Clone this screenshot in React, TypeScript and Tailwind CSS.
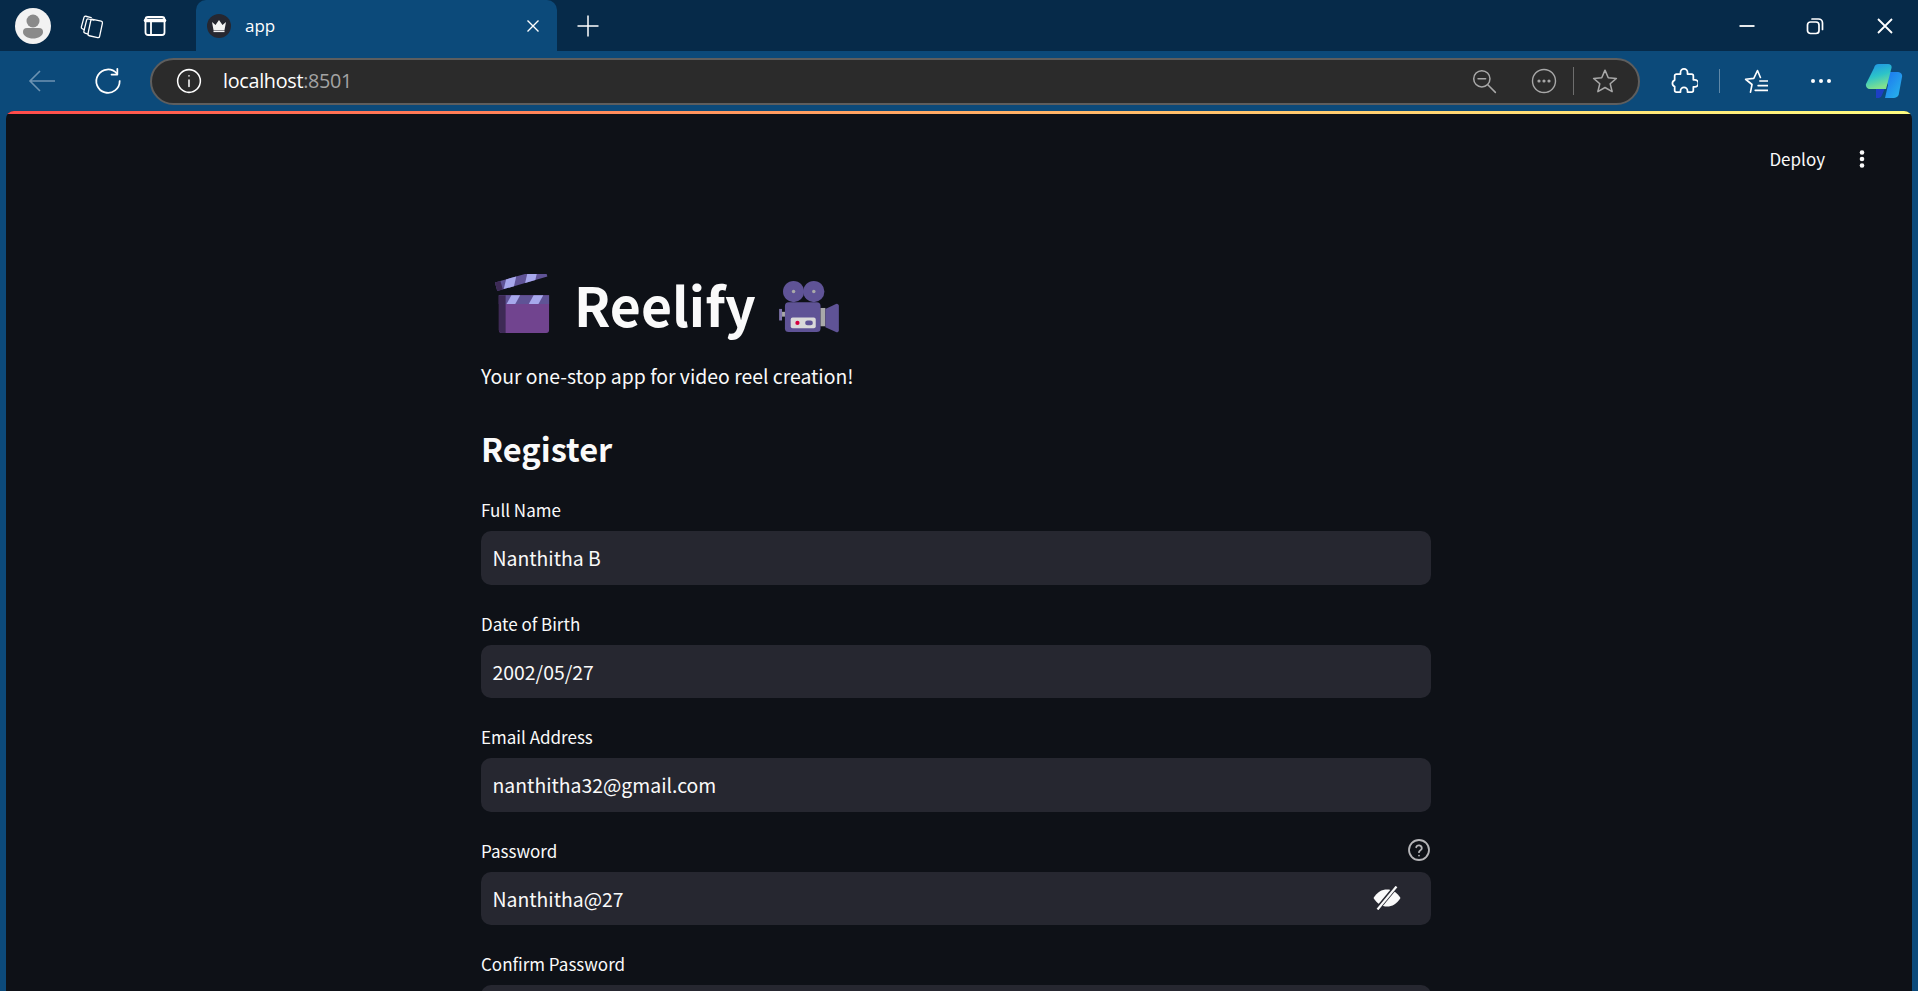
import React from "react";

const sans = { fontFamily: '"Noto Sans CJK SC", "Source Sans Pro", sans-serif' };

function Stroke({ size = 24, children, className = "", vb = 24, sw = 1.5 }: { size?: number; children: React.ReactNode; className?: string; vb?: number; sw?: number }) {
  return (
    <svg width={size} height={size} viewBox={`0 0 ${vb} ${vb}`} fill="none" stroke="currentColor" strokeWidth={sw} strokeLinecap="round" strokeLinejoin="round" className={className}>
      {children}
    </svg>
  );
}

function Clapper() {
  return (
    <svg width="56" height="60" viewBox="0 0 58 62">
      <g transform="rotate(-16 4 16)">
        <rect x="2" y="8" width="54" height="9" fill="#5f5396" />
        <rect x="2" y="8" width="6" height="9" fill="#3d2a55" />
        <polygon points="14,8 25,8 20,17 9,17" fill="#a7a8ec" />
        <polygon points="37,8 48,8 43,17 32,17" fill="#a7a8ec" />
      </g>
      <path d="M4 22h52v36a3 3 0 0 1-3 3H7a3 3 0 0 1-3-3z" fill="#71448f" />
      <path d="M4 22h7v39H7a3 3 0 0 1-3-3z" fill="#3d2a55" />
      <rect x="4" y="22" width="52" height="9" fill="#5f5396" />
      <rect x="4" y="22" width="7" height="9" fill="#3d2a55" />
      <polygon points="17,22 26,22 21,31 12,31" fill="#a7a8ec" />
      <polygon points="40,22 50,22 45,31 35,31" fill="#a7a8ec" />
    </svg>
  );
}

function Camera() {
  return (
    <svg width="60" height="52" viewBox="0 0 62 54">
      <rect x="0" y="29" width="3" height="12" fill="#7f74ad" />
      <rect x="3" y="32" width="6" height="5" fill="#a9a9a9" />
      <circle cx="15" cy="11" r="11" fill="#5f5396" />
      <circle cx="36" cy="11" r="11" fill="#5f5396" />
      <circle cx="15" cy="11" r="1.8" fill="#a9a9a9" />
      <circle cx="36" cy="11" r="1.8" fill="#a9a9a9" />
      <rect x="6" y="22" width="37" height="31" rx="4" fill="#5f5396" />
      <rect x="43" y="28" width="5" height="19" fill="#a9a9a9" />
      <path d="M48 29l11-5a2 2 0 0 1 3 2v25a2 2 0 0 1-3 2l-11-5z" fill="#5f5396" />
      <rect x="12" y="38" width="26" height="11" rx="2" fill="#d9d9d9" />
      <circle cx="19" cy="43.5" r="2.2" fill="#d5003d" />
      <rect x="27" y="41" width="8" height="5" rx="2.5" fill="#5f5396" />
    </svg>
  );
}

function Field({ label, value, help, eye }: { label: string; value: string; help?: boolean; eye?: boolean }) {
  return (
    <div className="mb-[25px]">
      <div className="flex h-[27px] items-center justify-between text-[17px] leading-[27px] text-[#fafafa]">
        <span>{label}</span>
        {help && (
          <Stroke size={24} className="text-[#b5b5b8]" sw={1.8}>
            <circle cx="12" cy="12" r="10" />
            <path d="M9.2 9.2a2.9 2.9 0 0 1 5.6 1c0 1.9-2.8 2.4-2.8 4" />
            <path d="M12 17.6h.01" />
          </Stroke>
        )}
      </div>
      <div className="mt-[8px] flex h-[53.5px] items-center justify-between rounded-[10px] bg-[#262730] pl-[11.500px] pr-[30px] text-[19.4px] text-[#fafafa]">
        <span>{value}</span>
        {eye && (
          <svg width="28" height="24" viewBox="0 0 28 24">
            <path d="M0.5 12C4 6 9 3.500 14 3.500S24 6 27.500 12C24 18 19 20.500 14 20.500S4 18 0.5 12z" fill="#fafafa" />
            <path d="M23 0.5L4 23.5" stroke="#262730" strokeWidth="4.500" />
            <path d="M23.5 0.5L4.5 23.5" stroke="#fafafa" strokeWidth="2.2" />
          </svg>
        )}
      </div>
    </div>
  );
}

export default function App() {
  return (
    <div className="flex h-[991px] w-[1918px] flex-col overflow-hidden bg-[#0c4a7a]" style={{ fontFamily: '"Open Sans", sans-serif' }}>
      {/* Tab strip */}
      <div className="flex h-[51px] shrink-0 items-center bg-[#062a49] text-white">
        <div className="ml-[15px] flex h-[36px] w-[36px] items-center justify-center overflow-hidden rounded-full bg-[#f2f2f2]">
          <svg width="36" height="36" viewBox="0 0 36 36">
            <circle cx="18" cy="13" r="6.5" fill="#8a8a8a" />
            <path d="M8 24a4 4 0 0 1 4-4h12a4 4 0 0 1 4 4c0 4-5 6.5-10 6.5S8 28 8 24z" fill="#8a8a8a" />
          </svg>
        </div>
        <div className="ml-[28px] flex w-[26px] justify-center">
          <Stroke size={26} sw={1.2}>
            <rect x="9.5" y="6.5" width="11" height="15.5" rx="1.5" transform="rotate(12 15 14)" />
            <path d="M8.5 19.5L5.5 18.5a1.4 1.4 0 0 1-1-1.7L7 6.5a1.4 1.4 0 0 1 1.7-1l5 1" />
            <path d="M5 15.5L3 14.5a1.4 1.4 0 0 1-.8-1.7L4.6 4a1.4 1.4 0 0 1 1.7-1l5 1.2" />
          </Stroke>
        </div>
        <div className="ml-[37px] flex w-[26px] justify-center">
          <Stroke size={24} sw={1.8}>
            <rect x="2.5" y="3" width="19" height="18" rx="2.5" />
            <path d="M2.5 6.500h19" strokeWidth="3.500" />
            <path d="M8 8v13" />
          </Stroke>
        </div>
        <div className="ml-[28px] flex h-[51px] w-[361px] items-center rounded-t-[10px] bg-[#0c4a7a]">
          <div className="ml-[11px] flex h-[24px] w-[24px] items-center justify-center rounded-full bg-[#262730]">
            <svg width="16" height="14" viewBox="0 0 16 14">
              <path d="M1 3l3.5 3L8 1l3.5 5L15 3l-1.5 8h-11z" fill="#f4f4f4" />
              <rect x="2.5" y="11.5" width="11" height="1.6" fill="#f4f4f4" />
            </svg>
          </div>
          <span className="ml-[14px] text-[17px]">app</span>
          <svg width="14" height="14" viewBox="0 0 14 14" className="ml-auto mr-[17px]" stroke="#fff" strokeWidth="1.4">
            <path d="M1.5 1.5l11 11M12.5 1.5l-11 11" />
          </svg>
        </div>
        <svg width="22" height="22" viewBox="0 0 22 22" className="ml-[20px]" stroke="#fff" strokeWidth="1.5">
          <path d="M11 0.5v21M0.5 11h21" />
        </svg>
        <svg width="18" height="18" viewBox="0 0 18 18" className="ml-auto" stroke="#fff" strokeWidth="1.8">
          <path d="M1.5 9h15" />
        </svg>
        <svg width="18" height="18" viewBox="0 0 18 18" className="ml-[50px]" fill="none" stroke="#fff" strokeWidth="1.7">
          <rect x="1.5" y="5" width="11.5" height="11.5" rx="3" />
          <path d="M6 2h6.5a4 4 0 0 1 4 4v6.5" strokeLinecap="round" />
        </svg>
        <svg width="18" height="18" viewBox="0 0 18 18" className="ml-[52px] mr-[24px]" stroke="#fff" strokeWidth="1.8">
          <path d="M2 2l14 14M16 2L2 16" />
        </svg>
      </div>

      {/* Toolbar */}
      <div className="flex h-[60px] shrink-0 items-center bg-[#0c4a7a] text-white">
        <svg width="28" height="24" viewBox="0 0 28 24" className="ml-[28px]" fill="none" stroke="#6d93b2" strokeWidth="1.6">
          <path d="M27 12H2M12 2L2 12l10 10" />
        </svg>
        <div className="ml-[38px]">
          <Stroke size={28} sw={1.5}>
            <path d="M19.5 5.5A10 10 0 1 0 22 12" />
            <path d="M20 1.5v5h-5" />
          </Stroke>
        </div>
        <div className="ml-[28px] flex h-[47px] w-[1490px] items-center rounded-full border-2 border-[#5e5e5e] bg-[#2b2b2b] pb-px">
          <div className="ml-[24px]">
            <Stroke size={26} sw={1.4}>
              <circle cx="12" cy="12" r="10.5" />
              <path d="M12 11v6M12 7.2v.1" />
            </Stroke>
          </div>
          <div className="ml-[21px] text-[19.8px] tracking-[-0.3px]">
            <span className="text-white">localhost</span>
            <span className="text-[#a3a3a3]">:8501</span>
          </div>
          <div className="ml-auto flex items-center text-[#a8a8a8]">
            <Stroke size={26} sw={1.4}>
              <circle cx="10" cy="10" r="7.5" />
              <path d="M6.5 10h7M15.5 15.5l7 7" />
            </Stroke>
            <svg width="26" height="26" viewBox="0 0 26 26" className="ml-[34px]" fill="none" stroke="currentColor" strokeWidth="1.4">
              <circle cx="13" cy="13" r="11.5" />
              <circle cx="8" cy="13" r="0.9" fill="currentColor" />
              <circle cx="13" cy="13" r="0.9" fill="currentColor" />
              <circle cx="18" cy="13" r="0.9" fill="currentColor" />
            </svg>
            <div className="ml-[16px] h-[28px] w-px bg-[#6e6e6e]" />
            <Stroke size={26} className="ml-[18px]" sw={1.4}>
              <path d="M12 2l3 7 7.5.6-5.7 4.9 1.8 7.3L12 18l-6.6 3.8 1.8-7.3L1.5 9.6 9 9z" />
            </Stroke>
            <div className="w-[20px]" />
          </div>
        </div>
        <Stroke size={28} className="ml-[30px]" sw={1.5}>
          <path d="M9 4.5a3 3 0 0 1 6 0V6h3.5a1.5 1.5 0 0 1 1.5 1.5V11h1.3a3 3 0 0 1 0 6H20v3a1.5 1.5 0 0 1-1.5 1.5H15v-1a3 3 0 0 0-6 0v1H5.5A1.5 1.5 0 0 1 4 20v-3.2a3 3 0 0 1 0-5.6V7.500A1.500 1.500 0 0 1 5.500 6H9z" />
        </Stroke>
        <div className="ml-[21px] h-[24px] w-px bg-[#5f88a8]" />
        <Stroke size={28} className="ml-[20px]" sw={1.4}>
          <path d="M9 21.500l1.300-6.500-5.500-4.500 7-.7L15 3l2.500 6" />
          <path d="M17 12h8M15.500 16h9.500M13 20h12" />
        </Stroke>
        <svg width="22" height="6" viewBox="0 0 22 6" className="ml-[42px]" fill="#fff">
          <circle cx="3" cy="3" r="2" />
          <circle cx="11" cy="3" r="2" />
          <circle cx="19" cy="3" r="2" />
        </svg>
        <svg width="38" height="34" viewBox="0 0 38 34" className="ml-[33px]">
          <defs>
            <linearGradient id="cpa" x1="0" y1="0" x2="0.3" y2="1">
              <stop offset="0" stopColor="#1e8fe8" />
              <stop offset="0.55" stopColor="#2cc3c9" />
              <stop offset="1" stopColor="#7fe08f" />
            </linearGradient>
            <linearGradient id="cpb" x1="0" y1="0" x2="1" y2="1">
              <stop offset="0" stopColor="#1b6ff0" />
              <stop offset="1" stopColor="#28b8ea" />
            </linearGradient>
          </defs>
          <path d="M18 8h15a4 4 0 0 1 4 5l-3 16a5 5 0 0 1-5 5h-9l3-13z" fill="url(#cpb)" />
          <path d="M11 24h9l-3 7a4 4 0 0 1-3 3h-3z" fill="#1d3fc4" />
          <path d="M9 4a5 5 0 0 1 5-4h9c3 0 4 2 3.500 4L21 25H5a4 4 0 0 1-4-5z" fill="url(#cpa)" />
        </svg>
      </div>

      {/* Page */}
      <div className="mx-[6px] flex min-h-0 flex-1 flex-col overflow-hidden rounded-t-[8px] bg-[#0e1117] pr-[6px] text-[#fafafa]" style={sans}>
        <div className="-mr-[6px] h-[3px] shrink-0 bg-gradient-to-r from-[#ff4b4b] to-[#fffd80]" />
        <div className="flex h-[90px] shrink-0 items-center justify-end">
          <span className="text-[17px] font-normal">Deploy</span>
          <svg width="6" height="20" viewBox="0 0 6 20" className="ml-[34px] mr-[41px]" fill="#fafafa">
            <circle cx="3" cy="3.500" r="2.300" />
            <circle cx="3" cy="10" r="2.300" />
            <circle cx="3" cy="16.500" r="2.300" />
          </svg>
        </div>
        <div className="mx-auto w-[950px] pt-[62px]">
          <div className="flex h-[76px] items-center text-[53.5px] font-bold leading-none text-[#fafafa]">
            <span className="ml-[14px] flex"><Clapper /></span>
            <span className="ml-[23px]">Reelify</span>
            <span className="ml-[23px] mt-[6px] flex"><Camera /></span>
          </div>
          <p className="mt-[18px] text-[19.4px] leading-[32px]">Your one-stop app for video reel creation!</p>
          <h2 className="mt-[31px] text-[32.6px] font-semibold leading-[50px]">Register</h2>
          <div className="mt-[23px]">
            <Field label="Full Name" value="Nanthitha B" />
            <Field label="Date of Birth" value="2002/05/27" />
            <Field label="Email Address" value="nanthitha32@gmail.com" />
            <Field label="Password" value="Nanthitha@27" help eye />
            <Field label="Confirm Password" value="" />
          </div>
        </div>
      </div>
    </div>
  );
}
